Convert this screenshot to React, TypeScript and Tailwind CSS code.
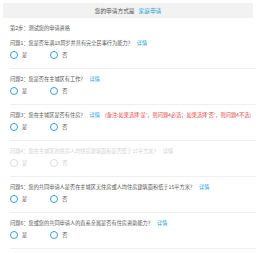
const QUESTIONS = [
  { no: 1, text: "您是否年满18周岁并具有完全民事行为能力？" },
  { no: 2, text: "您是否在主城区有工作？" },
  {
    no: 3,
    text: "您在主城区是否有住房？",
    note: "(备注:如果选择'是'，则问题4必选；如果选择'否'，则问题4不选)",
  },
  { no: 4, text: "您在主城区的住房人均住房建筑面积是否低于15平方米？", disabled: true },
  { no: 5, text: "您的共同申请人是否在主城区无住房或人均住房建筑面积低于15平方米？" },
  { no: 6, text: "您或您的共同申请人的直系亲属是否有住房资助能力？" },
];

function Radio({ label, disabled }: { label: string; disabled?: boolean }) {
  return (
    <label className="flex items-center gap-[4px]">
      <span
        className={
          disabled
            ? "h-[8px] w-[8px] rounded-full border border-[#dcdcdc]"
            : "h-[8px] w-[8px] rounded-full border-[1.3px] border-[#3a9fc6]"
        }
      />
      <span className={disabled ? "text-[#cfcfcf]" : "text-[#555]"}>{label}</span>
    </label>
  );
}

export default function App() {
  return (
    <div
      className="min-h-[254px] w-full bg-white pt-[3px] text-[5.2px] leading-[8px] text-[#555]"
      style={{ fontFamily: '"Noto Sans CJK SC", "Noto Sans", sans-serif' }}
    >
      {/* Header */}
      <div className="mx-[3px] flex h-[15px] items-center justify-center bg-[#f2f2f2] text-[5.7px] text-[#555]">
        您的申请方式是
        <span className="ml-[4px] text-[#1e9fd6]">家庭申请</span>
      </div>

      <div className="pl-[10px]">
        <p className="mt-[6px]">第2步：测试您的申请资格</p>

        <div className="mt-[7px]">
          {QUESTIONS.map((q, i) => (
            <div
              key={q.no}
              className={`border-b border-[#efefef] pb-[9px] ${i === 0 ? "" : "pt-[6px]"}`}
            >
              <p className={q.disabled ? "whitespace-nowrap text-[#d2d2d2]" : "whitespace-nowrap"}>
                问题{q.no}：{q.text}
                <span className={q.disabled ? "ml-[4px]" : "ml-[4px] text-[#1e9fd6]"}>详情</span>
                {q.note && <span className="ml-[5px] text-[#e04848]">{q.note}</span>}
              </p>
              <div className="mt-[4px] flex items-center gap-[23px]">
                <Radio label="是" disabled={q.disabled} />
                <Radio label="否" disabled={q.disabled} />
              </div>
            </div>
          ))}
        </div>
      </div>
    </div>
  );
}
